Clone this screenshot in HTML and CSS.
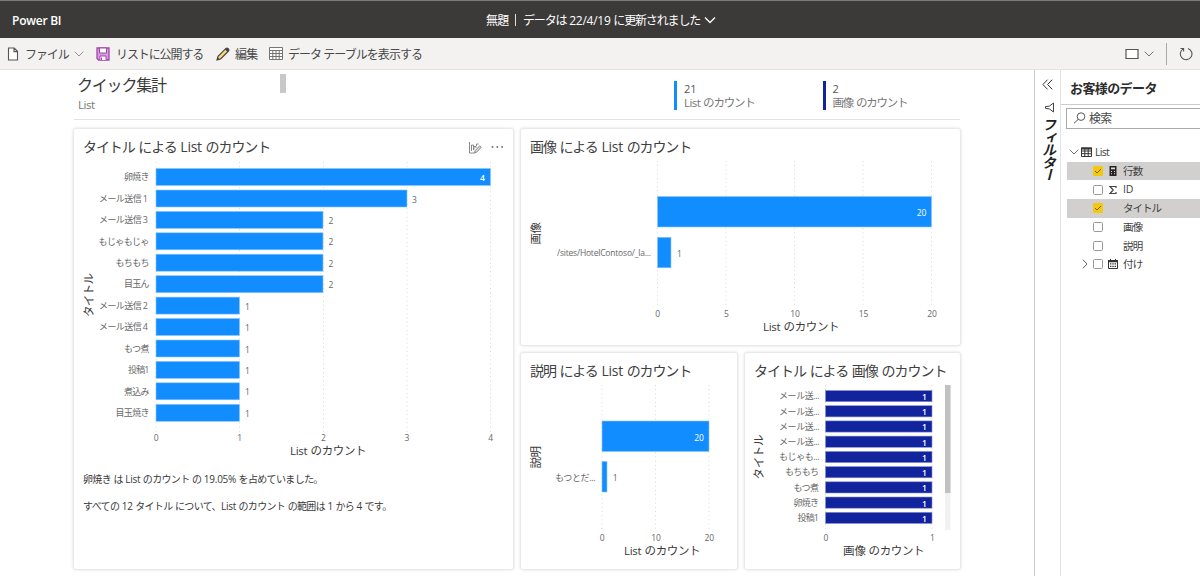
FILE: index.html
```html
<!DOCTYPE html>
<html lang="ja">
<head>
<meta charset="utf-8">
<title>Power BI</title>
<link rel="stylesheet" href="styles.css">
</head>
<body>
<header class="topbar">
  <span class="brand">Power BI</span>
  <div class="doc"><span class="doc-name">無題</span><span class="doc-sep"></span><span class="doc-status">データは <em>22/4/19</em> に更新されました</span>
    <svg width="12" height="8" viewBox="0 0 12 8"><path d="M1 1.5l5 5 5-5" fill="none" stroke="#fff" stroke-width="1.3"/></svg>
  </div>
</header>
<nav class="toolbar">
  <div class="tool tool-file">
    <svg width="12" height="14" viewBox="0 0 12 14"><path d="M1.5 1h5.7l3.3 3.3V13h-9zM7 1v3.6h3.5" fill="#fff" stroke="#555" stroke-width="1.1"/></svg>
    <span class="t-file">ファイル</span>
    <svg class="chev" width="10" height="6" viewBox="0 0 10 6"><path d="M.7.7L5 5 9.3.7" fill="none" stroke="#888" stroke-width=".9"/></svg>
  </div>
  <div class="tool tool-save">
    <svg width="14" height="14" viewBox="0 0 14 14"><path d="M1 1h12v12H2.5L1 11.5z" fill="#d59be0" stroke="#a347ad" stroke-width="1.3"/><path d="M3.5 1h7v5h-7z" fill="#fff" stroke="#a347ad"/><path d="M4 13V9h6v4" fill="#fff" stroke="#a347ad"/><path d="M5.5 10.5v2.5" stroke="#a347ad"/></svg>
    <span class="t-save">リストに公開する</span>
  </div>
  <div class="tool tool-edit">
    <svg width="14" height="14" viewBox="0 0 14 14"><path d="M1 13l1-3.7L10 1.4q1-.8 2 .1l.5.6q.8 1 0 1.9L4.6 12z" fill="#f5d77a" stroke="#444" stroke-width="1.1"/><path d="M9 2.4l2.6 2.6 1.2-1.2q.6-.8 0-1.6l-1-1q-.8-.5-1.5.1zM1 13l.8-2.7 1.9 1.9z" fill="#444"/></svg>
    <span class="t-edit">編集</span>
  </div>
  <div class="tool tool-table">
    <svg width="14" height="13" viewBox="0 0 14 13"><path d="M.5.5h13v12H.5z" fill="#fff"/><path d="M.5.5h13v12H.5zM.5 3.5h13M.5 6.5h13M.5 9.5h13M3.8 3.5v9M7 3.5v9M10.2 3.5v9" fill="none" stroke="#666" stroke-width=".9"/></svg>
    <span class="t-table">データ テーブルを表示する</span>
  </div>
  <div class="tools-right">
    <svg width="14" height="12" viewBox="0 0 14 12"><path d="M1 1.5h12v9H1z" fill="#fff" stroke="#555" stroke-width="1.2"/></svg>
    <svg class="chev2" width="10" height="6" viewBox="0 0 10 6"><path d="M.7.7L5 5 9.3.7" fill="none" stroke="#666" stroke-width=".9"/></svg>
    <span class="vline"></span>
    <svg width="14" height="14" viewBox="0 0 14 14"><path d="M4.2 1.9A5.8 5.8 0 1 0 9 1.4M1.5 1.5H4.6V4.6" fill="none" stroke="#555" stroke-width="1.1"/></svg>
  </div>
</nav>
<div class="workspace">
  <main class="canvas">
    <section class="summary">
      <div class="heading">
        <h1>クイック集計</h1>
        <p>List</p>
      </div>
      <span class="thumb"></span>
      <div class="kpi kpi-list"><b>21</b><span><em>List</em> のカウント</span></div>
      <div class="kpi kpi-image"><b>2</b><span>画像 のカウント</span></div>
    </section>
    <section class="cards">
      <article class="card card-tall">
        <h2><span class="w1">タイトル による <em>List</em> のカウント</span>
          <svg class="personalize" width="14" height="13" viewBox="0 0 14 13"><path d="M1.5 1v11h5M3.5 10V4h2v5M6 8.5V5.5h2V7M8.5 5V3h2" fill="none" stroke="#888"/><path d="M6.5 12l.7-2.4L11.7 4.8l1.5 1.4-4.5 4.9z" fill="#ddd" stroke="#888"/></svg>
          <svg class="more" width="13" height="4" viewBox="0 0 13 4" fill="#777"><circle cx="1.5" cy="2" r="1"/><circle cx="6.3" cy="2" r="1"/><circle cx="11.1" cy="2" r="1"/></svg>
        </h2>
        <svg class="chart" width="439" height="302" viewBox="74 161 439 302">
          <path class="grid" d="M156 162v270M239.5 162v270M323.5 162v270M407 162v270M490.5 162v270"/>
          <g class="bars">
            <rect x="156" y="168.5" width="334.5" height="17"/><rect x="156" y="190" width="251" height="17"/>
            <rect x="156" y="211.4" width="167" height="17"/><rect x="156" y="232.8" width="167" height="17"/>
            <rect x="156" y="254.2" width="167" height="17"/><rect x="156" y="275.7" width="167" height="17"/>
            <rect x="156" y="297.1" width="83.5" height="17"/><rect x="156" y="318.5" width="83.5" height="17"/>
            <rect x="156" y="340" width="83.5" height="17"/><rect x="156" y="361.4" width="83.5" height="17"/>
            <rect x="156" y="382.8" width="83.5" height="17"/><rect x="156" y="404.3" width="83.5" height="17"/>
          </g>
          <g class="cat">
            <text x="124" y="180.3" textLength="25.5">卵焼き</text><text x="99" y="201.7" textLength="49">メール送信 1</text>
            <text x="99" y="223.1" textLength="49">メール送信 3</text><text x="98.5" y="244.6" textLength="51">もじゃもじゃ</text>
            <text x="115.5" y="266" textLength="34">もちもち</text><text x="124" y="287.4" textLength="25.5">目玉ん</text>
            <text x="99" y="308.9" textLength="49">メール送信 2</text><text x="99" y="330.3" textLength="49">メール送信 4</text>
            <text x="124" y="351.8" textLength="25.5">もつ煮</text><text x="128" y="373.2" textLength="21.5">投稿1</text>
            <text x="124" y="394.6" textLength="25.5">煮込み</text><text x="115.5" y="416.1" textLength="34">目玉焼き</text>
          </g>
          <g class="val">
            <text class="in strong" x="482.5" y="181">4</text><text x="414.5" y="202.5">3</text>
            <text x="331" y="223.9">2</text><text x="331" y="245.3">2</text><text x="331" y="266.7">2</text><text x="331" y="288.2">2</text>
            <text x="247.5" y="309.6">1</text><text x="247.5" y="331">1</text><text x="247.5" y="352.5">1</text><text x="247.5" y="373.9">1</text><text x="247.5" y="395.3">1</text><text x="247.5" y="416.8">1</text>
            <text x="156.3" y="441">0</text><text x="239.8" y="441">1</text><text x="323.5" y="441">2</text><text x="407" y="441">3</text><text x="490.8" y="441">4</text>
          </g>
          <g class="axis"><text x="290" y="455" textLength="17.5">List</text><text x="310.5" y="455" textLength="56">のカウント</text><text transform="translate(92.5 317) rotate(-90)" textLength="44">タイトル</text></g>
        </svg>
        <p class="note note-1">卵焼き は <em>List</em> のカウント の <em>19.05%</em> を占めていました。</p>
        <p class="note note-2">すべての <em>12</em> タイトル について、<em>List</em> のカウント の範囲は <em>1</em> から <em>4</em> です。</p>
      </article>
      <article class="card card-wide">
        <h2><span class="w2">画像 による <em>List</em> のカウント</span></h2>
        <svg class="chart" width="439" height="184" viewBox="521 161 439 184">
          <path class="grid" d="M657.5 161v146M726 161v146M794.5 161v146M863 161v146M931.5 161v146"/>
          <g class="bars"><rect x="657.5" y="196.5" width="274" height="30.5"/><rect x="657.5" y="237.3" width="13.5" height="30.5"/></g>
          <g class="cat"><text class="path" x="557" y="256" textLength="94">/sites/HotelContoso/_la...</text></g>
          <g class="val"><text class="in" x="921.5" y="215.8">20</text><text x="679.5" y="256.5">1</text>
            <text x="657.8" y="316.5">0</text><text x="726.5" y="316.5">5</text><text x="795" y="316.5">10</text><text x="863.5" y="316.5">15</text><text x="932" y="316.5">20</text></g>
          <g class="axis"><text x="763" y="330.5" textLength="17.5">List</text><text x="783.5" y="330.5" textLength="56">のカウント</text><text transform="translate(540 244.5) rotate(-90)" textLength="22.5">画像</text></g>
        </svg>
      </article>
      <article class="card">
        <h2><span class="w2">説明 による <em>List</em> のカウント</span></h2>
        <svg class="chart" width="215" height="184" viewBox="521 385 215 184">
          <path class="grid" d="M602 385v146M655.5 385v146M709 385v146"/>
          <g class="bars"><rect x="602" y="421" width="107" height="30.5"/><rect x="602" y="461.5" width="5" height="30.5"/></g>
          <g class="cat"><text x="555" y="480.5" textLength="40.5">もつとだ...</text></g>
          <g class="val"><text class="in" x="699" y="440.5">20</text><text x="615.2" y="481">1</text>
            <text x="602.3" y="541">0</text><text x="656" y="541">10</text><text x="709.3" y="541">20</text></g>
          <g class="axis"><text x="624" y="555" textLength="17.5">List</text><text x="644.5" y="555" textLength="56">のカウント</text><text transform="translate(540 468.5) rotate(-90)" textLength="22.5">説明</text></g>
        </svg>
      </article>
      <article class="card">
        <h2><span class="w3">タイトル による 画像 のカウント</span></h2>
        <svg class="chart" width="215" height="184" viewBox="745 385 215 184">
          <path class="grid" d="M825.5 385v146M932 385v146"/>
          <g class="bars navy">
            <rect x="825.5" y="390.5" width="106.5" height="11.2"/><rect x="825.5" y="405.7" width="106.5" height="11.2"/><rect x="825.5" y="420.9" width="106.5" height="11.2"/>
            <rect x="825.5" y="436.1" width="106.5" height="11.2"/><rect x="825.5" y="451.4" width="106.5" height="11.2"/><rect x="825.5" y="466.6" width="106.5" height="11.2"/>
            <rect x="825.5" y="481.8" width="106.5" height="11.2"/><rect x="825.5" y="497" width="106.5" height="11.2"/><rect x="825.5" y="512.3" width="106.5" height="11.2"/>
          </g>
          <g class="cat">
            <text x="779" y="399.2" textLength="40.5">メール送...</text><text x="779" y="414.5" textLength="40.5">メール送...</text><text x="779" y="429.7" textLength="40.5">メール送...</text>
            <text x="779" y="444.9" textLength="40.5">メール送...</text><text x="779" y="460.2" textLength="40.5">もじゃも...</text><text x="785" y="475.4" textLength="34">もちもち</text>
            <text x="793.5" y="490.7" textLength="25.5">もつ煮</text><text x="793.5" y="506.2" textLength="25.5">卵焼き</text><text x="797.5" y="521.4" textLength="21.5">投稿1</text>
          </g>
          <g class="val">
            <g class="in strong"><text x="924.5" y="400">1</text><text x="924.5" y="415.2">1</text><text x="924.5" y="430.4">1</text><text x="924.5" y="445.7">1</text><text x="924.5" y="460.9">1</text><text x="924.5" y="476.1">1</text><text x="924.5" y="491.4">1</text><text x="924.5" y="506.6">1</text><text x="924.5" y="521.8">1</text></g>
            <text x="826" y="541">0</text><text x="932.5" y="541">1</text>
          </g>
          <g class="axis"><text x="843" y="555" textLength="23">画像</text><text x="868.5" y="555" textLength="56">のカウント</text><text transform="translate(763 479.5) rotate(-90)" textLength="45">タイトル</text></g>
          <rect x="945" y="385" width="5.5" height="145" fill="#f1f1f1"/><rect x="945" y="385" width="5.5" height="108" fill="#c1c1c1"/>
        </svg>
      </article>
    </section>
  </main>
  <aside class="filters">
    <svg width="11" height="11" viewBox="0 0 11 11"><path d="M5.5.7L.9 5.5l4.6 4.8M10.2.7L5.6 5.5l4.6 4.8" fill="none" stroke="#333" stroke-width="1"/></svg>
    <svg class="funnel" width="11" height="11" viewBox="0 0 11 11"><path d="M9.5 1v9L5.2 6.8 1.5 6.4V4.6L5.2 4.2z" fill="none" stroke="#444"/></svg>
    <span>フィルター</span>
  </aside>
  <aside class="data">
    <h3><span>お客様のデータ</span></h3>
    <div class="search"><svg width="13" height="12" viewBox="0 0 13 12"><circle cx="8" cy="4.6" r="3.8" fill="none" stroke="#555"/><path d="M5.2 7.4L1 11.3" stroke="#555"/></svg><span>検索</span></div>
    <div class="tree">
      <div class="row root"><svg width="10" height="6" viewBox="0 0 10 6"><path d="M.7.7L5 5 9.3.7" fill="none" stroke="#666" stroke-width=".9"/></svg><svg width="11" height="10" viewBox="0 0 11 10"><path d="M.5 1h10v8.5H.5zM.5 4h10M.5 6.7h10M3.8 2v7.5M7.2 2v7.5" fill="none" stroke="#333"/><path d="M0 .5h11v2H0z" fill="#333"/></svg><span class="s-list">List</span></div>
      <div class="row on"><i></i><svg class="box" viewBox="0 0 10 10"><rect width="10" height="10" rx="1" fill="#f2c811"/><path d="M2 5l2 2 4-4" fill="none" stroke="#665500" stroke-width=".9"/></svg><svg class="ico" viewBox="0 0 10 10"><path d="M1.5 0h7v10h-7z" fill="#252423"/><path d="M3 1.5h4v1.8H3zM3 5h1v1H3zM6 5h1v1H6zM3 7.2h1v1H3zM6 7.2h1v1H6z" fill="#ddd"/></svg><span>行数</span></div>
      <div class="row"><i></i><svg class="box" viewBox="0 0 10 10"><rect x=".5" y=".5" width="9" height="9" rx="1.2" fill="#fff" stroke="#999"/></svg><svg class="ico" viewBox="0 0 10 10"><path d="M8 3V1.5H2L5.2 5 2 8.5h6V7" fill="none" stroke="#444" stroke-width="1.2"/></svg><span class="latin">ID</span></div>
      <div class="row on"><i></i><svg class="box" viewBox="0 0 10 10"><rect width="10" height="10" rx="1" fill="#f2c811"/><path d="M2 5l2 2 4-4" fill="none" stroke="#665500" stroke-width=".9"/></svg><b class="ico"></b><span class="kana">タイトル</span></div>
      <div class="row"><i></i><svg class="box" viewBox="0 0 10 10"><rect x=".5" y=".5" width="9" height="9" rx="1.2" fill="#fff" stroke="#999"/></svg><b class="ico"></b><span>画像</span></div>
      <div class="row"><i></i><svg class="box" viewBox="0 0 10 10"><rect x=".5" y=".5" width="9" height="9" rx="1.2" fill="#fff" stroke="#999"/></svg><b class="ico"></b><span>説明</span></div>
      <div class="row"><svg class="caret" width="6" height="10" viewBox="0 0 6 10"><path d="M.8.7L5 5 .8 9.3" fill="none" stroke="#555" stroke-width=".9"/></svg><svg class="box" viewBox="0 0 10 10"><rect x=".5" y=".5" width="9" height="9" rx="1.2" fill="#fff" stroke="#999"/></svg><svg class="ico" viewBox="0 0 10 10"><path d="M.5 1.5h9v8h-9zM2.5 0v2M7.5 0v2" fill="none" stroke="#333"/><path d="M0 1h10v2.3H0zM2 4.3h1.4v1.2H2zM4.3 4.3h1.4v1.2H4.3zM6.6 4.3H8v1.2H6.6zM2 6.8h1.4V8H2zM4.3 6.8h1.4V8H4.3zM6.6 6.8H8V8H6.6z" fill="#333"/></svg><span>付け</span></div>
    </div>
  </aside>
</div>
</body>
</html>
```

FILE: styles.css
```css
* { box-sizing: border-box; margin: 0; padding: 0; }
body {
  width: 1200px; height: 576px; overflow: hidden;
  display: flex; flex-direction: column;
  font-family: "Open Sans", "Noto Sans CJK JP", sans-serif;
  font-size: 12px; color: #484848; background: #fff; white-space: nowrap;
}
svg { display: block; flex: none; }
em { font-style: normal; letter-spacing: -.25px; }
.topbar { height: 38px; flex: none; background: #3b3a38; border-top: 1px solid #7c7b78; color: #fff; display: flex; align-items: center; padding: 1px 0 0 12px; }
.brand { font-weight: 600; font-size: 12px; letter-spacing: -.25px; width: 474px; }
.doc { display: flex; align-items: center; }
.doc-name { letter-spacing: -.7px; font-size: 12px; width: 22px; }
.doc-sep { width: 1px; height: 12px; background: #ddd; margin: 0 7px; }
.doc-status { letter-spacing: -1.15px; word-spacing: .8px; margin-right: 5px; width: 176px; }
.toolbar { height: 32px; flex: none; background: #f3f2f1; border-bottom: 1px solid #e3e3e3; display: flex; align-items: center; padding-left: 7px; }
.tool { display: flex; align-items: center; flex: none; }
.tool-file { width: 89px; gap: 6px; }
.tool-save { width: 120px; gap: 6px; }
.tool-edit { width: 53px; gap: 5px; }
.tool-table { gap: 5px; }
.t-file { letter-spacing: -1.1px; width: 43px; }
.t-save { letter-spacing: -1.1px; }
.t-edit { letter-spacing: -.8px; }
.t-table { letter-spacing: -.95px; }
.tools-right { margin-left: auto; display: flex; align-items: center; padding-right: 7px; }
.chev2 { margin-left: 5px; }
.vline { width: 1px; height: 22px; background: #aaa; margin: 0 12px; }
.workspace { flex: 1; min-height: 0; display: flex; }
.canvas { width: 1034px; flex: none; padding: 0 74px; }
.summary { width: 886px; height: 50px; border-bottom: 1px solid #e3e3e3; display: flex; }
.heading { width: 206px; padding: 3px 0 0 3px; }
h1 { font-size: 16px; line-height: 24px; font-weight: 400; letter-spacing: -1.2px; color: #3a3a3a; }
.heading p { line-height: 16px; color: #777; font-size: 11.5px; letter-spacing: -.5px; padding-left: 1px; }
.thumb { width: 6px; height: 19px; margin: 4px 388px 0 0; background: #c8c8c8; }
.kpi { height: 29px; margin-top: 11px; border-left: 3px solid #118dff; padding-left: 7px; width: 148.5px; font-size: 11.5px; line-height: 14.5px; color: #777; }
.kpi-image { border-color: #12239e; width: 120px; }
.kpi b { display: block; font-weight: 400; font-size: 11px; color: #555; padding-top: 1px; height: 15px; }
.kpi span { letter-spacing: -1.2px; word-spacing: 1px; display: block; line-height: 14px; }
.kpi em { letter-spacing: -.55px; }
.cards { margin-top: 9px; display: grid; grid-template-columns: 439px 216px 215px; grid-template-rows: 216px 216px; column-gap: 8px; row-gap: 8px; }
.card { background: #fff; border-radius: 2px; box-shadow: 0 0 3px 1px #dedede; }
.card-tall { grid-row: span 2; }
.card-wide { grid-column: span 2; }
h2 { height: 32px; padding: 1px 9px 0; display: flex; align-items: center; font-size: 14px; font-weight: 400; color: #404040; }
.w1 { letter-spacing: -1.1px; word-spacing: 1.2px; }
.w2 { letter-spacing: -1.12px; word-spacing: 1.2px; }
.w3 { letter-spacing: -1.02px; word-spacing: 1.1px; }
.personalize { margin: 4px 9px 0 auto; }
.more { margin-top: 3px; }
.chart text { font-family: "Open Sans", "Noto Sans CJK JP", sans-serif; }
.grid { stroke: #d8d8d8; stroke-width: 1; stroke-dasharray: 1 3.2; fill: none; }
.bars rect { fill: #118dff; stroke: #8cc6fb; stroke-width: .6; }
.navy rect { fill: #12239e; stroke: #8b93d0; }
.cat text { font-size: 9px; fill: #686868; }
.cat .path { font-size: 8.5px; }
.val text { font-size: 8.5px; fill: #686868; text-anchor: middle; }
.val .in, .val .in text { fill: #fff; }
.strong, .strong text { font-weight: 600; }
.axis text { font-size: 11.5px; fill: #3a3a3a; }
.note { padding-left: 9px; font-size: 10px; height: 27px; line-height: 32px; color: #3a3a3a; letter-spacing: -.65px; word-spacing: .5px; }
.filters { width: 26px; flex: none; border-left: 1px solid #c8c8c8; display: flex; flex-direction: column; align-items: center; padding-top: 9px; color: #222; }
.funnel { margin: 12px 0 0 4px; }
.filters span { writing-mode: vertical-rl; font-size: 14px; font-weight: 600; font-style: italic; letter-spacing: -1.5px; line-height: 18px; margin: 5px 0 0 1px; }
.data { flex: 1; border-left: 1px solid #e3e3e3; min-width: 0; }
h3 { height: 35px; border-bottom: 1px solid #ccc; padding: 3px 0 0 9px; line-height: 31px; font-size: 13px; color: #2c2c2c; letter-spacing: -.6px; }
.search { margin: 3px 0 0 5px; height: 21px; border: 1px solid #aaa; border-right: 0; display: flex; align-items: center; gap: 3px; padding: 0 0 1px 6px; letter-spacing: -.7px; }
.tree { padding: 14px 0 0 6px; font-size: 10.5px; }
.row { height: 18.7px; display: flex; align-items: center; letter-spacing: -.8px; color: #404040; }
.row span { margin-top: -1px; }
.on { background: #d2d0ce; }
.root { padding-left: 2px; gap: 2px; letter-spacing: -.7px; font-size: 10.5px; }
.row .s-list { margin: 0 0 0 1px; }
.latin { letter-spacing: -.3px; }
.kana { letter-spacing: -1px; }
.row i { width: 26px; flex: none; }
.caret { margin: 0 5px 0 15px; }
.box { width: 10px; height: 10px; }
.ico { width: 10px; height: 10px; margin: 0 5px; flex: none; }
```
